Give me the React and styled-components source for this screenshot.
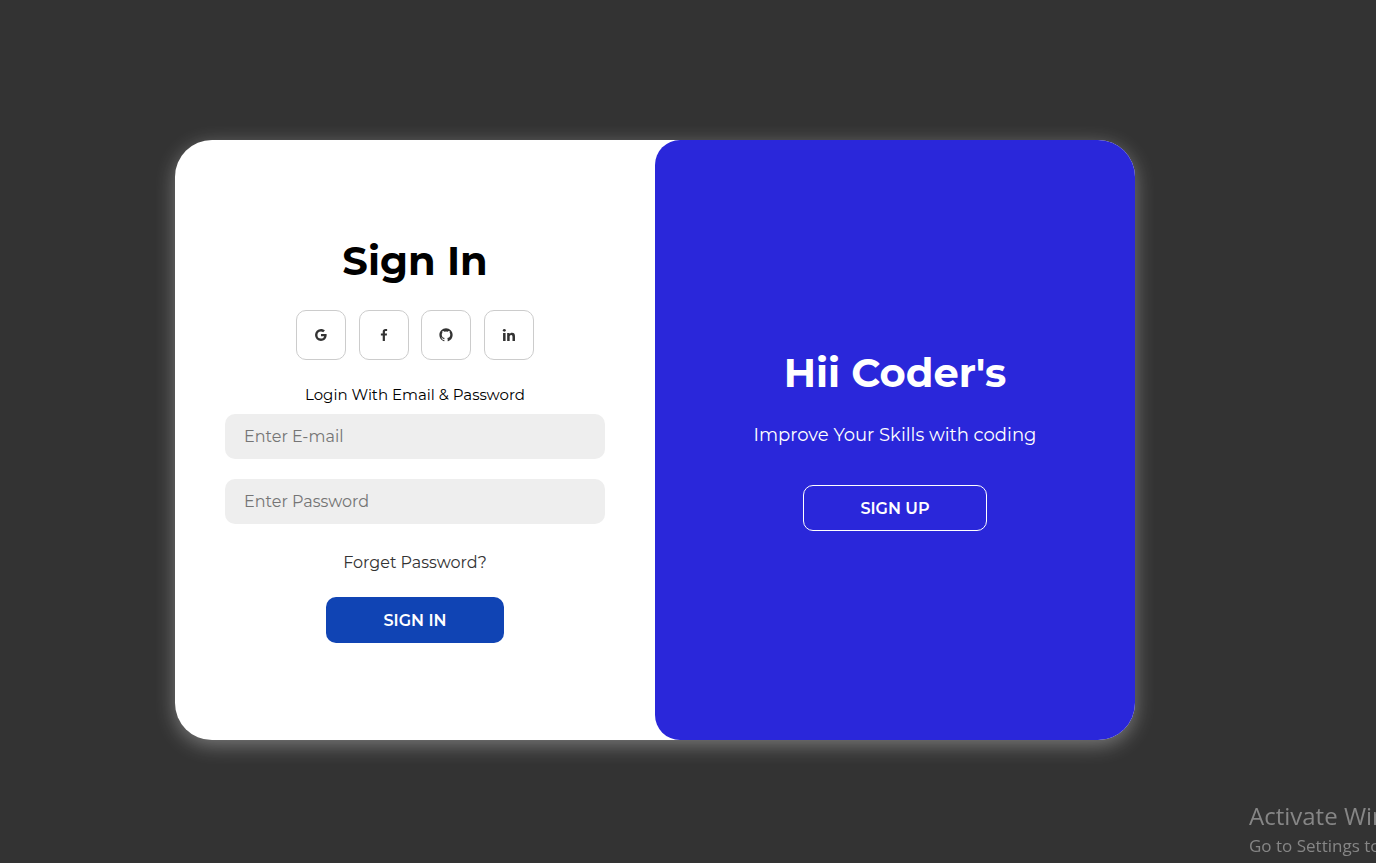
import React from "react";
import styled, { createGlobalStyle } from "styled-components";
import {
  BiLogoGoogle,
  BiLogoFacebook,
  BiLogoGithub,
  BiLogoLinkedin,
} from "react-icons/bi";

const GlobalStyle = createGlobalStyle`
  * { box-sizing: border-box; margin: 0; padding: 0; }
  body {
    background: #333;
    font-family: Montserrat, Inter, sans-serif;
    color: #000;
  }
  button, input { font-family: inherit; }
`;

const Page = styled.main`
  display: flex;
  align-items: center;
  justify-content: center;
  min-height: 100vh;
  padding: 17px 66px 0 0;
`;

const Card = styled.div`
  display: grid;
  grid-template-columns: 1fr 1fr;
  width: 100%;
  max-width: 960px;
  min-height: 600px;
  overflow: hidden;
  border-radius: 37px;
  background: #fff;
  box-shadow: 0 5px 20px rgba(255, 255, 255, 0.35);
`;

const Form = styled.form`
  display: flex;
  flex-direction: column;
  align-items: center;
  justify-content: center;
  padding: 0 50px;
`;

const Welcome = styled.section`
  display: flex;
  flex-direction: column;
  align-items: center;
  justify-content: center;
  padding: 0 30px;
  border-radius: 25px 0 0 25px;
  background: #2a27da;
  color: #fff;
`;

const Title = styled.h1`
  font-size: 40px;
  line-height: 48px;
  font-weight: 700;
`;

const SocialRow = styled.nav`
  display: flex;
  justify-content: space-between;
  width: 238px;
  margin: 25px 0;
`;

const SocialLink = styled.a`
  display: flex;
  align-items: center;
  justify-content: center;
  width: 50px;
  height: 50px;
  border: 1px solid #ccc;
  border-radius: 10px;
  color: #333;
  font-size: 16px;
`;

const Hint = styled.p`
  margin-bottom: 9px;
  font-size: 15px;
  line-height: 20px;
`;

const Field = styled.input`
  width: 100%;
  height: 45px;
  margin-bottom: 20px;
  padding: 0 19px;
  border: none;
  border-radius: 10px;
  outline: none;
  background: #eee;
  font-size: 16px;

  &::placeholder { color: #757575; }
`;

const ForgotLink = styled.a`
  margin: 9px 0 24px;
  color: #333;
  font-size: 16px;
  line-height: 20px;
  text-decoration: none;
`;

const Lead = styled.p`
  margin: 28px 0 40px;
  font-size: 18px;
  line-height: 20px;
`;

const Button = styled.button`
  width: ${({ $outlined }) => ($outlined ? "184px" : "178px")};
  height: 46px;
  border: ${({ $outlined }) => ($outlined ? "1px solid #fff" : "none")};
  border-radius: 10px;
  background: ${({ $outlined }) => ($outlined ? "transparent" : "#1044b4")};
  color: #fff;
  font-size: 16px;
  font-weight: 600;
  text-transform: uppercase;
  cursor: pointer;
`;

const Watermark = styled.aside`
  position: fixed;
  right: 0;
  bottom: 4px;
  width: 127px;
  overflow: hidden;
  color: #868686;
  font-family: "Segoe UI", "Open Sans", sans-serif;
  white-space: nowrap;
  pointer-events: none;
`;

const WatermarkTitle = styled.p`
  font-size: 24px;
  line-height: 34px;
`;

const WatermarkText = styled.p`
  font-size: 17px;
  line-height: 26px;
`;

const socials = [
  { name: "Google", Icon: BiLogoGoogle },
  { name: "Facebook", Icon: BiLogoFacebook },
  { name: "GitHub", Icon: BiLogoGithub },
  { name: "LinkedIn", Icon: BiLogoLinkedin },
];

export default function App() {
  return (
    <>
      <GlobalStyle />
      <Page>
        <Card>
          <Form onSubmit={(e) => e.preventDefault()}>
            <Title>Sign In</Title>
            <SocialRow>
              {socials.map(({ name, Icon }) => (
                <SocialLink key={name} href="#" aria-label={name}>
                  <Icon />
                </SocialLink>
              ))}
            </SocialRow>
            <Hint>Login With Email &amp; Password</Hint>
            <Field type="email" placeholder="Enter E-mail" aria-label="E-mail" />
            <Field type="password" placeholder="Enter Password" aria-label="Password" />
            <ForgotLink href="#">Forget Password?</ForgotLink>
            <Button type="submit">Sign In</Button>
          </Form>
          <Welcome>
            <Title>Hii Coder's</Title>
            <Lead>Improve Your Skills with coding</Lead>
            <Button type="button" $outlined>Sign Up</Button>
          </Welcome>
        </Card>
      </Page>
      <Watermark>
        <WatermarkTitle>Activate Windows</WatermarkTitle>
        <WatermarkText>Go to Settings to activate Windows.</WatermarkText>
      </Watermark>
    </>
  );
}
